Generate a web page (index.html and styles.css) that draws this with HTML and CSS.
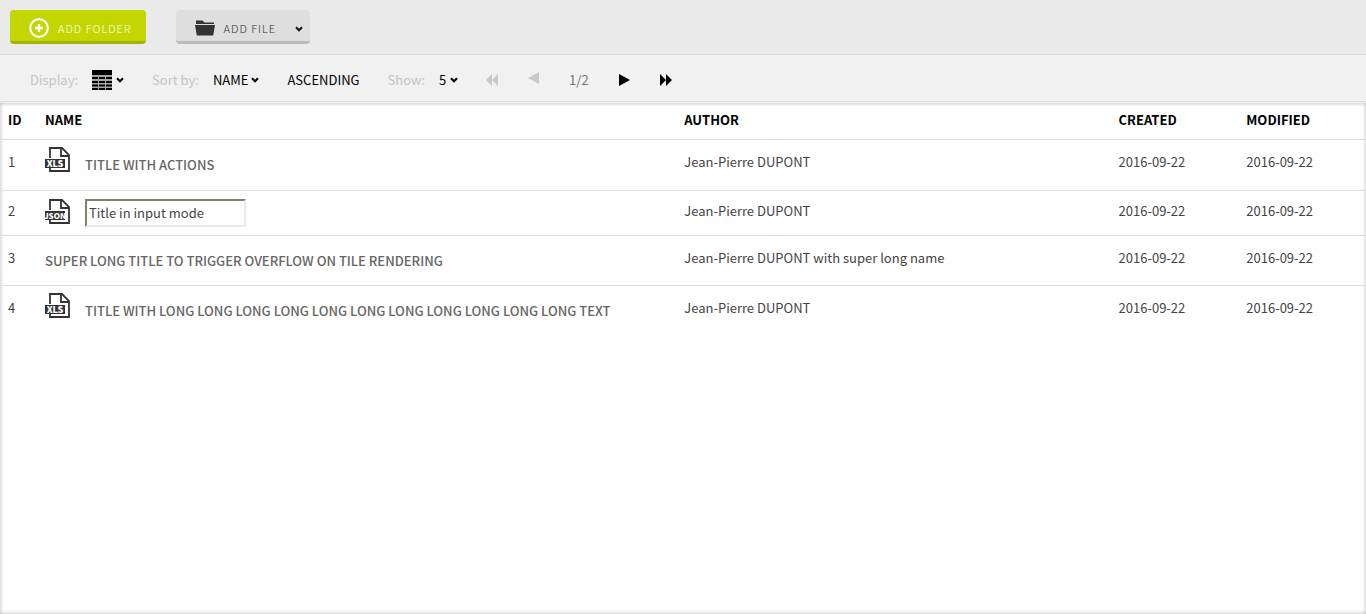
FILE: index.html
```html
<!DOCTYPE html>
<html lang="en">
<head>
<meta charset="utf-8">
<title>Files</title>
<link rel="stylesheet" href="styles.css">
</head>
<body>
<svg class="sprite" aria-hidden="true">
  <symbol id="chevron" viewBox="0 0 8 8"><path d="M1 2.300l3 3 3-3" fill="none" stroke="currentColor" stroke-width="2"/></symbol>
  <symbol id="page" viewBox="0 0 26 26">
    <path d="M5 11V1h12l7 7v16H5v-4" fill="none" stroke="#333" stroke-width="1.8"/>
    <path d="M16 1v8h8" fill="none" stroke="#333" stroke-width="1.8"/>
    <path d="M0 12h20v9H0z" fill="#333"/>
  </symbol>
</svg>
<header class="actions">
  <button class="btn btn-primary" type="button">
    <svg class="icon-plus" viewBox="0 0 20 20" aria-hidden="true"><circle cx="10" cy="10" r="8.8" fill="none" stroke="currentColor" stroke-width="2.2"/><path d="M10 6v8M6 10h8" stroke="currentColor" stroke-width="2.4"/></svg>
    <span>ADD FOLDER</span>
  </button>
  <div class="split">
    <button class="btn btn-file" type="button">
      <svg class="icon-folder" viewBox="0 0 20 16" aria-hidden="true"><path d="M1 4V.5h6.500L9.500 2.500H19V4z M0 5h20l-1.800 10.500H1.800z" fill="currentColor"/></svg>
      <span>ADD FILE</span>
    </button>
    <button class="btn btn-more" type="button" aria-label="More file types"><svg class="chevron"><use href="#chevron"/></svg></button>
  </div>
</header>
<nav class="toolbar">
  <div class="control">
    <span class="label" id="display-label">Display:</span>
    <button class="plain" type="button" aria-labelledby="display-label">
      <svg class="icon-table" viewBox="0 0 20 20" aria-hidden="true"><path d="M0 0h20v5H0z M0 7h6v2H0z M7 7h6v2H7z M14 7h6v2h-6z M0 11h6v2H0z M7 11h6v2H7z M14 11h6v2h-6z M0 14.500h6v2H0z M7 14.500h6v2H7z M14 14.500h6v2h-6z M0 18h6v2H0z M7 18h6v2H7z M14 18h6v2h-6z" fill="#000"/><path d="M0 5h20v15H0z" fill="#000" opacity=".3"/></svg>
      <svg class="chevron"><use href="#chevron"/></svg>
    </button>
  </div>
  <div class="control">
    <label class="label" for="sort">Sort by:</label>
    <span class="picker">
      <select id="sort" class="select select-name"><option>NAME</option><option>AUTHOR</option></select>
      <svg class="chevron"><use href="#chevron"/></svg>
    </span>
  </div>
  <button class="plain" type="button">ASCENDING</button>
  <div class="control">
    <label class="label" for="show">Show:</label>
    <span class="picker">
      <select id="show" class="select"><option>5</option><option>9</option></select>
      <svg class="chevron"><use href="#chevron"/></svg>
    </span>
  </div>
  <div class="pager">
    <button class="plain" type="button" disabled aria-label="First page"><svg class="icon-skip" viewBox="0 0 12 12"><path d="M6 0v12L0 6z M12 0v12L6 6z" fill="currentColor"/></svg></button>
    <button class="plain previous" type="button" disabled aria-label="Previous page"><svg class="icon-step" viewBox="0 0 11 12"><path d="M11 0v12L0 6z" fill="currentColor"/></svg></button>
    <span class="count">1/2</span>
    <button class="plain" type="button" aria-label="Next page"><svg class="icon-step" viewBox="0 0 11 12"><path d="M0 0v12l11-6z" fill="currentColor"/></svg></button>
    <button class="plain" type="button" aria-label="Last page"><svg class="icon-skip" viewBox="0 0 12 12"><path d="M0 0v12l6-6z M6 0v12l6-6z" fill="currentColor"/></svg></button>
  </div>
</nav>
<main class="content">
  <table class="files">
    <colgroup><col class="col-id"><col class="col-name"><col class="col-author"><col class="col-date"><col class="col-date"></colgroup>
    <thead><tr><th>ID</th><th>NAME</th><th>AUTHOR</th><th>CREATED</th><th>MODIFIED</th></tr></thead>
    <tbody>
      <tr>
        <td>1</td>
        <td class="name"><div class="entry">
          <svg class="icon-file" viewBox="0 0 26 26" role="img" aria-label="XLS file"><use href="#page"/><text class="badge" x="10" y="20">XLS</text></svg>
          <span class="title">TITLE WITH ACTIONS</span></div></td>
        <td>Jean-Pierre DUPONT</td><td>2016-09-22</td><td>2016-09-22</td>
      </tr>
      <tr class="editing">
        <td>2</td>
        <td class="name"><div class="entry">
          <svg class="icon-file" viewBox="0 0 26 26" role="img" aria-label="JSON file"><use href="#page"/><text class="badge badge-long" x="10" y="20">JSON</text></svg>
          <input class="title-input" type="text" aria-label="Title" value="Title in input mode"></div></td>
        <td>Jean-Pierre DUPONT</td><td>2016-09-22</td><td>2016-09-22</td>
      </tr>
      <tr>
        <td>3</td>
        <td class="name"><div class="entry"><span class="title">SUPER LONG TITLE TO TRIGGER OVERFLOW ON TILE RENDERING</span></div></td>
        <td>Jean-Pierre DUPONT with super long name</td><td>2016-09-22</td><td>2016-09-22</td>
      </tr>
      <tr>
        <td>4</td>
        <td class="name"><div class="entry">
          <svg class="icon-file" viewBox="0 0 26 26" role="img" aria-label="XLS file"><use href="#page"/><text class="badge" x="10" y="20">XLS</text></svg>
          <span class="title">TITLE WITH LONG LONG LONG LONG LONG LONG LONG LONG LONG LONG LONG TEXT</span></div></td>
        <td>Jean-Pierre DUPONT</td><td>2016-09-22</td><td>2016-09-22</td>
      </tr>
    </tbody>
  </table>
</main>
</body>
</html>
```
FILE: styles.css
```css
* { box-sizing: border-box; }
body {
  margin: 0;
  min-height: 100vh;
  display: flex;
  flex-direction: column;
  background: #f1f1f1;
  color: #444;
  font: 13px/20px "Noto Sans CJK JP", "Noto Sans", sans-serif;
}
button, select, input { font: inherit; color: inherit; margin: 0; }
svg { display: block; flex: none; }
.sprite { position: absolute; width: 0; height: 0; }
.chevron { width: 8px; height: 8px; }

.actions {
  display: flex;
  gap: 30px;
  padding: 10px;
  background: #eaeaea;
  border-bottom: 1px solid #ddd;
}
.btn {
  display: flex;
  align-items: center;
  height: 34px;
  border: 0;
  border-bottom: 3px solid #bababa;
  background: #dedede;
  color: #333;
  font-size: 11px;
  font-weight: 300;
  letter-spacing: 1px;
  padding: 4px 0 0;
}
.btn-primary {
  gap: 9px;
  padding: 4px 14px 0 19px;
  border-radius: 4px;
  background: #c3d600;
  border-color: #a4b400;
  color: #fff;
}
.split { display: flex; }
.btn-file { gap: 9px; padding-left: 19px; border-radius: 4px 0 0 4px; }
.btn-more { padding: 6px 7px 0 19px; border-radius: 0 4px 4px 0; color: #111; }
.icon-plus { width: 20px; height: 20px; }
.icon-folder { width: 20px; height: 16px; }

.toolbar {
  display: flex;
  align-items: center;
  gap: 28px;
  height: 47px;
  padding: 3px 30px 0;
  border-bottom: 1px solid #ddd;
  color: #000;
}
.control { display: flex; align-items: center; gap: 14px; }
.label { color: #c4c4c4; }
.picker { display: flex; align-items: center; gap: 3px; }
.plain {
  display: flex;
  align-items: center;
  gap: 4px;
  padding: 0;
  border: 0;
  background: none;
}
.plain:disabled { color: #c8c8c8; }
.select { appearance: none; border: 0; padding: 0; background: none; }
.select-name { field-sizing: content; }
.icon-table { width: 20px; height: 20px; }
.pager { display: flex; align-items: center; gap: 30px; }
.previous { padding-bottom: 4px; }
.count { color: #777; }
.icon-skip { width: 12px; height: 12px; }
.icon-step { width: 11px; height: 12px; }

.content {
  flex: 1;
  margin-top: 1px;
  background: #fff;
  box-shadow: inset 0 0 4px rgba(0, 0, 0, .3);
}
.files { width: 100%; table-layout: fixed; border-collapse: separate; border-spacing: 0; }
.col-id { width: 37px; }
.col-author { width: 31.8%; }
.col-date { width: 9.35%; }
th, td { text-align: left; vertical-align: top; border-bottom: 1px solid #ddd; }
th { padding: 7px 8px 9px; color: #000; font-weight: 700; }
td { padding: 12px 8px; }
.name { padding: 7px 8px; }
.entry { display: flex; align-items: flex-start; gap: 14px; }
.title { color: #666; font-weight: 500; line-height: 35px; }
.editing td { padding-top: 10px; padding-bottom: 8px; }
.editing .name { padding-top: 8px; }
tbody tr:last-child td { border-bottom: 0; }
.icon-file { width: 26px; height: 26px; margin-bottom: 10px; }
.editing .icon-file { margin-bottom: 2px; }
.badge { font: 900 9px "Noto Sans CJK JP", sans-serif; fill: #fff; text-anchor: middle; }
.badge-long { font-size: 8px; }
.title-input {
  width: 161px;
  height: 28px;
  padding: 0 2px 2px;
  border: 2px solid;
  border-color: #857f70 #ebebe6 #ebebe6 #857f70;
  background: #fff;
  color: #444;
}
```
